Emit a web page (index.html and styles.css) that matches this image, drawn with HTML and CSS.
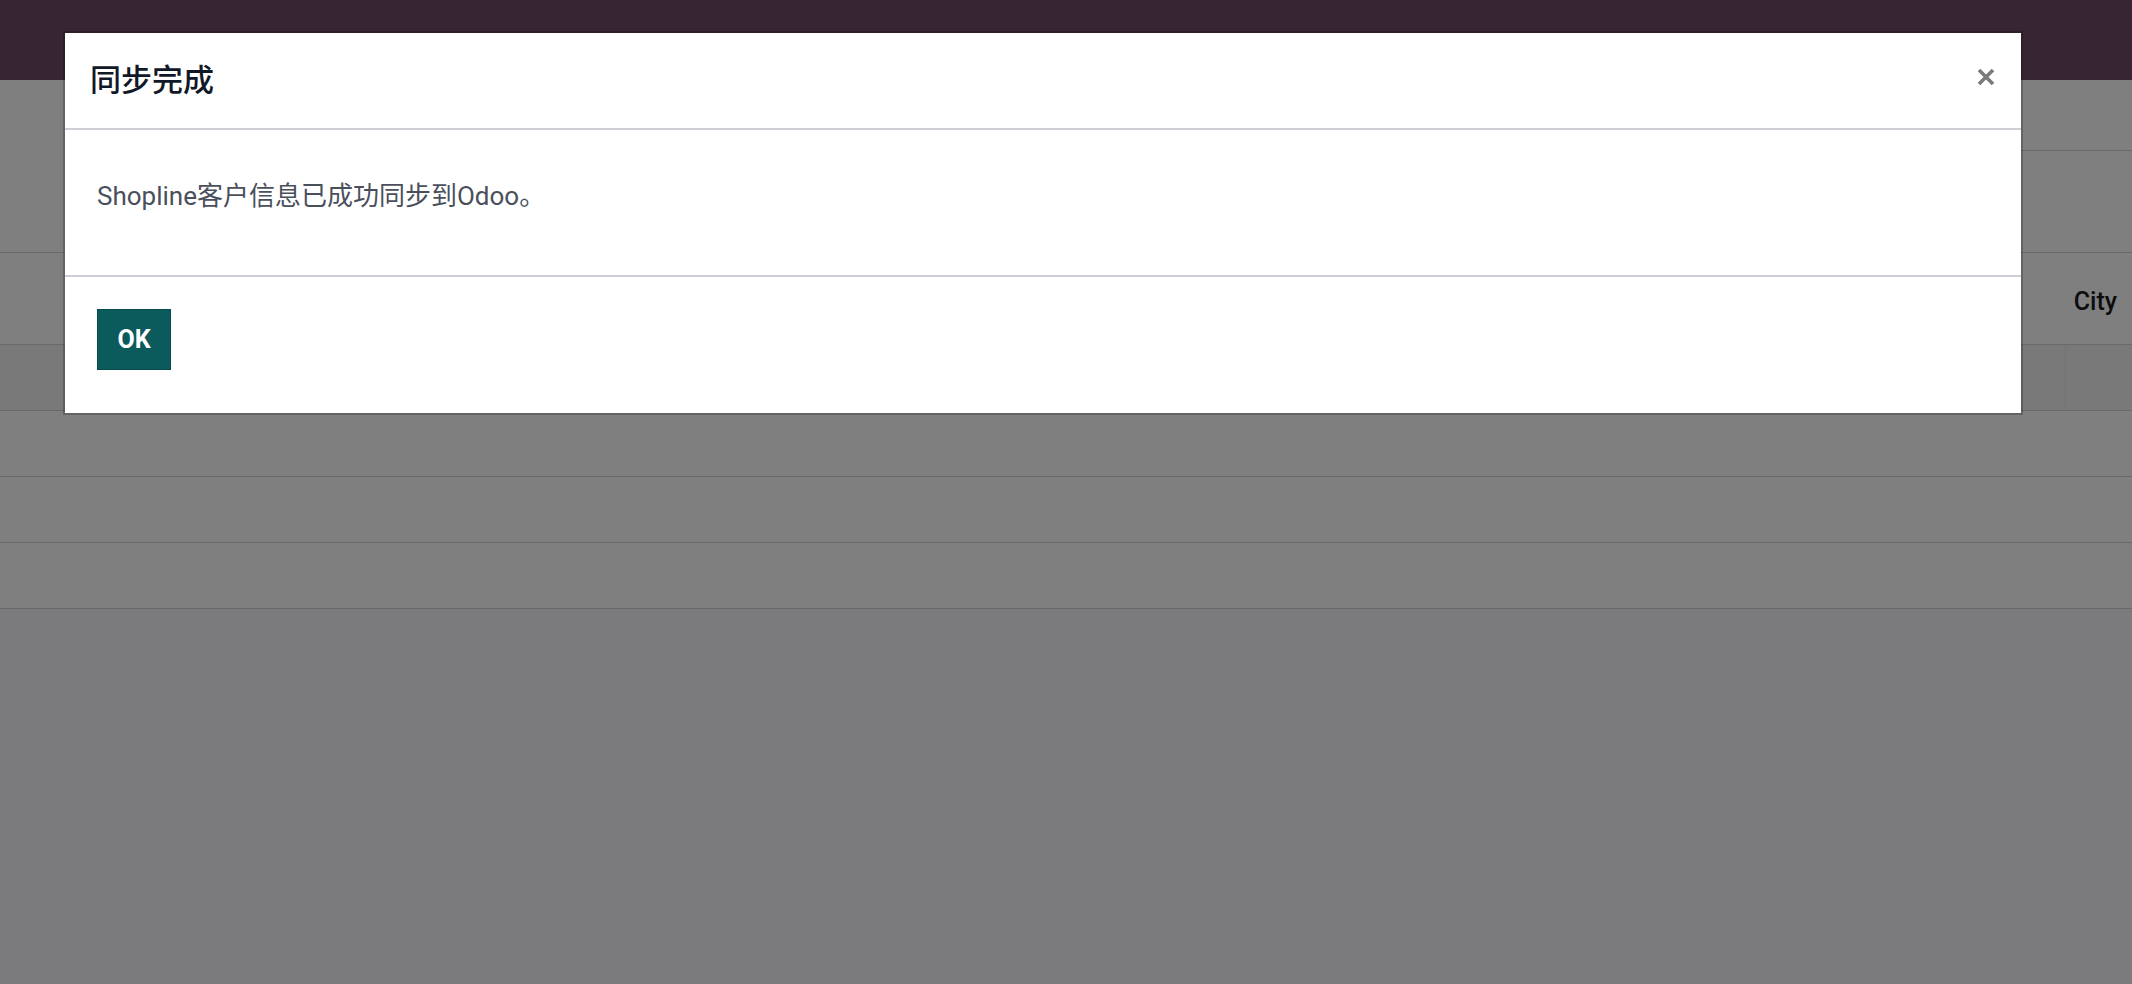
FILE: index.html
```html
<!DOCTYPE html>
<html lang="zh">
<head>
<meta charset="utf-8">
<title>同步完成</title>
<link rel="stylesheet" href="styles.css">
</head>
<body>
<div class="app">
  <header class="navbar"></header>
  <div class="control-panel">
    <div class="cp-top">
      <div class="cp-spacer"></div>
      <div class="cp-search"></div>
    </div>
  </div>
  <div class="list">
    <div class="list-head">
      <div class="cell-main"></div>
      <div class="cell-city">City</div>
    </div>
    <div class="list-row row-active">
      <div class="cell-main"></div>
      <div class="cell-city divider"></div>
    </div>
    <div class="list-row">
      <div class="cell-main"></div>
      <div class="cell-city"></div>
    </div>
    <div class="list-row">
      <div class="cell-main"></div>
      <div class="cell-city"></div>
    </div>
    <div class="list-row">
      <div class="cell-main"></div>
      <div class="cell-city"></div>
    </div>
  </div>
</div>

<div class="backdrop"></div>
<div class="modal" role="dialog">
  <div class="modal-header">
    <h4 class="modal-title">同步完成</h4>
    <button class="btn-close" aria-label="Close">
      <svg width="18" height="18" viewBox="0 0 18 18"><path d="M2 2 L16 16 M16 2 L2 16" stroke="#7a7a7a" stroke-width="3.6" stroke-linecap="butt"/></svg>
    </button>
  </div>
  <div class="modal-body">
    <p>Shopline客户信息已成功同步到Odoo。</p>
  </div>
  <div class="modal-footer">
    <button class="btn-primary">OK</button>
  </div>
</div>
</body>
</html>
```

FILE: styles.css
```css
* { box-sizing: border-box; }

html, body {
  margin: 0;
  padding: 0;
  height: 100%;
}

body {
  background: #f6f6fa;
  font-family: Roboto, "Noto Sans CJK SC", sans-serif;
  overflow: hidden;
}

.app {
  display: flex;
  flex-direction: column;
}

.navbar {
  height: 80px;
  background: #714b67;
}

.control-panel {
  height: 173px;
  background: #ffffff;
  border-bottom: 1px solid #d3d3d3;
}

.cp-top {
  display: flex;
  height: 71px;
}

.cp-spacer { flex: 1; }

.cp-search {
  width: 1000px;
  border-bottom: 1px solid #d3d3d3;
}

.list {
  display: flex;
  flex-direction: column;
  background: #ffffff;
}

.list-head {
  display: flex;
  height: 92px;
  border-bottom: 1px solid #d3d3d3;
  align-items: center;
  padding-top: 5px;
}

.list-row {
  display: flex;
  height: 66px;
  border-bottom: 1px solid #d3d3d3;
}

.row-active { background: #f3f3f3; }

.cell-main { flex: 1; }

.cell-city {
  width: 67px;
  padding-right: 15px;
  text-align: right;
  font-size: 25px;
  font-weight: 500;
  color: #1a1a1a;
}

.divider { border-left: 1px solid #e6e6e6; }

.backdrop {
  position: fixed;
  inset: 0;
  background: rgba(0, 0, 0, 0.5);
}

.modal {
  position: fixed;
  top: 31px;
  left: 63px;
  width: 1960px;
  background: #ffffff;
  border: 2px solid rgba(0, 0, 0, 0.22);
  background-clip: padding-box;
  display: flex;
  flex-direction: column;
}

.modal-header {
  height: 97px;
  display: flex;
  align-items: center;
  justify-content: space-between;
  padding: 0 26px 0 25px;
  border-bottom: 2px solid #ccd0d4;
}

.modal-title {
  margin: 0;
  font-size: 31px;
  font-weight: 500;
  color: #111827;
  line-height: 1.2;
}

.btn-close {
  border: 0;
  background: transparent;
  padding: 0;
  width: 18px;
  height: 18px;
  margin-bottom: 7px;
  cursor: pointer;
  display: flex;
}

.modal-body {
  padding: 48px 32px 60px 32px;
  border-bottom: 2px solid #ccd0d4;
}

.modal-body p {
  margin: 0;
  font-size: 26px;
  line-height: 37px;
  color: #4a4f5c;
}

.modal-footer {
  display: flex;
  padding: 32px 32px 43px 32px;
}

.btn-primary {
  width: 74px;
  height: 61px;
  background: #0b5a5c;
  border: 1px solid #084a4c;
  color: #ffffff;
  font-family: Roboto, "Noto Sans CJK SC", sans-serif;
  font-size: 25px;
  font-weight: 700;
  padding: 0;
  cursor: pointer;
}
```
